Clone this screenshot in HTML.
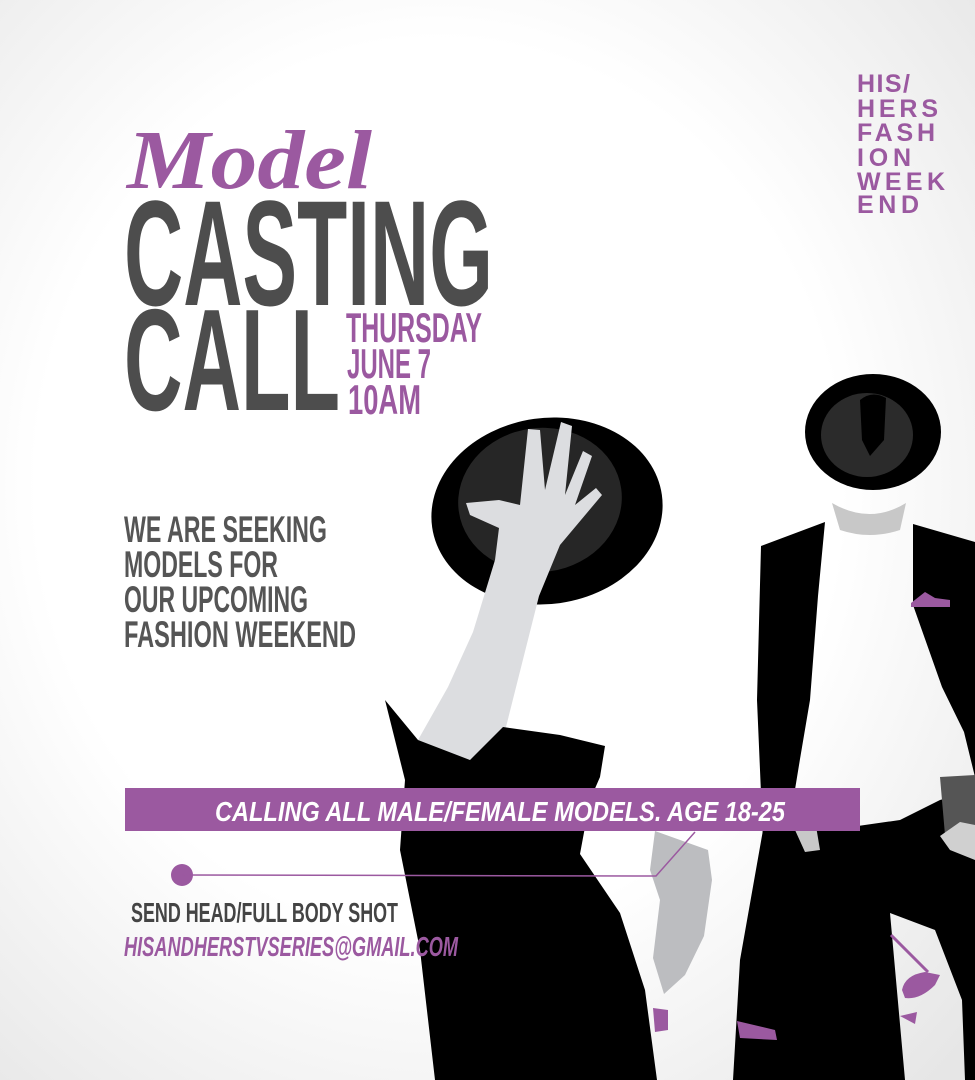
<!DOCTYPE html>
<html><head><meta charset="utf-8"><style>
html,body{margin:0;padding:0;background:#fff}
svg{display:block}
</style></head><body>
<svg width="975" height="1080" viewBox="0 0 975 1080" xmlns="http://www.w3.org/2000/svg">
<defs>
<radialGradient id="bg" cx="0.45" cy="0.45" r="0.75">
<stop offset="0.55" stop-color="#ffffff"/><stop offset="1" stop-color="#e6e6e6"/>
</radialGradient>
</defs>
<rect width="975" height="1080" fill="url(#bg)"/>

<!-- Logo -->
<g font-family="Liberation Sans, sans-serif" font-weight="bold" font-size="25" fill="#9b59a0">
<text x="857" y="92" textLength="53" lengthAdjust="spacing">HIS/</text>
<text x="857" y="117" textLength="81" lengthAdjust="spacing">HERS</text>
<text x="857" y="141" textLength="78" lengthAdjust="spacing">FASH</text>
<text x="857" y="166" textLength="54" lengthAdjust="spacing">ION</text>
<text x="857" y="190" textLength="88" lengthAdjust="spacing">WEEK</text>
<text x="857" y="213" textLength="62" lengthAdjust="spacing">END</text>
</g>

<!-- Title -->
<text x="127" y="188" font-family="Liberation Serif, serif" font-style="italic" font-weight="bold" font-size="84" fill="#9b59a0" textLength="245" lengthAdjust="spacingAndGlyphs">Model</text>
<g font-family="Liberation Sans Narrow, Liberation Sans, sans-serif" font-weight="bold" fill="#4d4d4d">
<text x="124" y="305" font-size="150" textLength="369" lengthAdjust="spacingAndGlyphs">CASTING</text>
<text x="124" y="410" font-size="145" textLength="216" lengthAdjust="spacingAndGlyphs">CALL</text>
</g>
<g font-family="Liberation Sans Narrow, Liberation Sans, sans-serif" font-weight="bold" fill="#9b59a0" font-size="42">
<text x="346" y="342" textLength="136" lengthAdjust="spacingAndGlyphs">THURSDAY</text>
<text x="347" y="378" textLength="84" lengthAdjust="spacingAndGlyphs">JUNE 7</text>
<text x="348" y="414" textLength="73" lengthAdjust="spacingAndGlyphs">10AM</text>
</g>
<g font-family="Liberation Sans Narrow, Liberation Sans, sans-serif" font-weight="bold" fill="#555" font-size="37">
<text x="124" y="542" textLength="203" lengthAdjust="spacingAndGlyphs">WE ARE SEEKING</text>
<text x="124" y="577" textLength="154" lengthAdjust="spacingAndGlyphs">MODELS FOR</text>
<text x="124" y="612" textLength="184" lengthAdjust="spacingAndGlyphs">OUR UPCOMING</text>
<text x="124" y="647" textLength="232" lengthAdjust="spacingAndGlyphs">FASHION WEEKEND</text>
</g>

<!-- Woman -->
<ellipse cx="547" cy="511" rx="116" ry="93" transform="rotate(-8 547 511)" fill="#000"/>
<ellipse cx="540" cy="500" rx="82" ry="72" transform="rotate(-8 540 500)" fill="#262626"/>
<path d="M466,503 L499,500 L520,505 L528,429 L540,430 L545,490 L561,422 L572,426 L565,495 L583,451 L592,456 L575,505 L596,488 L602,495 L560,545 L539,596 L506,727 L470,760 L418,740 L448,687 L473,632 L495,560 L499,528 L470,515 Z" fill="#dcdde0"/>
<path d="M385,700 L418,740 L470,760 L503,727 L560,735 L605,746 L600,777 L590,800 L580,854 L620,913 L645,990 L657,1080 L435,1080 L420,950 L400,850 L405,780 Z" fill="#000"/>
<path d="M655,831 L708,850 L712,880 L704,936 L685,975 L664,994 L653,958 L660,900 L650,870 Z" fill="#bcbdc0"/>
<path d="M653,1008 L668,1010 L668,1030 L655,1032 Z" fill="#9b59a0"/>

<!-- Man -->
<path d="M832,503 Q870,525 906,503 L900,530 Q870,540 840,530 Z" fill="#c8c8c8"/>
<ellipse cx="873" cy="432" rx="68" ry="58" fill="#000"/>
<ellipse cx="867" cy="435" rx="46" ry="42" fill="#2b2b2b"/>
<path d="M860,400 Q872,390 886,398 L884,440 L870,456 L862,440 Z" fill="#000"/>
<path d="M761,546 L825,522 L818,596 L810,700 L800,759 L790,820 L763,840 L757,700 Z" fill="#000"/>
<path d="M913,524 L975,542 L975,777 L964,732 L942,687 L913,605 Z" fill="#000"/>
<path d="M911,603 L925,592 L935,598 L950,600 L950,607 L911,607 Z" fill="#9b59a0"/>
<path d="M763,830 L800,825 L830,830 L900,820 L940,800 L975,790 L975,1080 L965,1080 L962,1000 L935,930 L890,913 L905,1080 L733,1080 L740,960 Z" fill="#000"/>
<path d="M940,777 L975,775 L975,840 L945,835 Z" fill="#555"/>
<path d="M940,836 L960,822 L975,825 L975,860 L950,850 Z" fill="#d0d0d0"/>
<path d="M795,830 L815,820 L820,850 L805,852 Z" fill="#c8c8c8"/>
<path d="M737,1021 L775,1030 L777,1040 L740,1038 Z" fill="#9b59a0"/>
<path d="M891,935 L928,972" stroke="#9b59a0" stroke-width="3"/>
<path d="M902,990 Q905,975 925,972 L940,975 L935,985 Q920,1000 905,998 Z" fill="#9b59a0"/>
<path d="M900,1016 L917,1012 L915,1024 Z" fill="#9b59a0"/>

<!-- Banner -->
<rect x="125" y="788" width="735" height="43" fill="#9b59a0"/>
<text x="215" y="821" font-family="Liberation Sans Narrow, Liberation Sans, sans-serif" font-weight="bold" font-style="italic" font-size="28" fill="#fff" textLength="570" lengthAdjust="spacingAndGlyphs">CALLING ALL MALE/FEMALE MODELS. AGE 18-25</text>

<!-- Line -->
<circle cx="182" cy="875" r="11" fill="#9b59a0"/>
<path d="M182,875 L656,876 L695,832" fill="none" stroke="#9b59a0" stroke-width="1.5"/>

<text x="131" y="922" font-family="Liberation Sans Narrow, Liberation Sans, sans-serif" font-weight="bold" font-size="28" fill="#444" textLength="267" lengthAdjust="spacingAndGlyphs">SEND HEAD/FULL BODY SHOT</text>
<text x="124" y="956" font-family="Liberation Sans Narrow, Liberation Sans, sans-serif" font-weight="bold" font-style="italic" font-size="28" fill="#9b59a0" textLength="334" lengthAdjust="spacingAndGlyphs">HISANDHERSTVSERIES@GMAIL.COM</text>
</svg>
</body></html>
